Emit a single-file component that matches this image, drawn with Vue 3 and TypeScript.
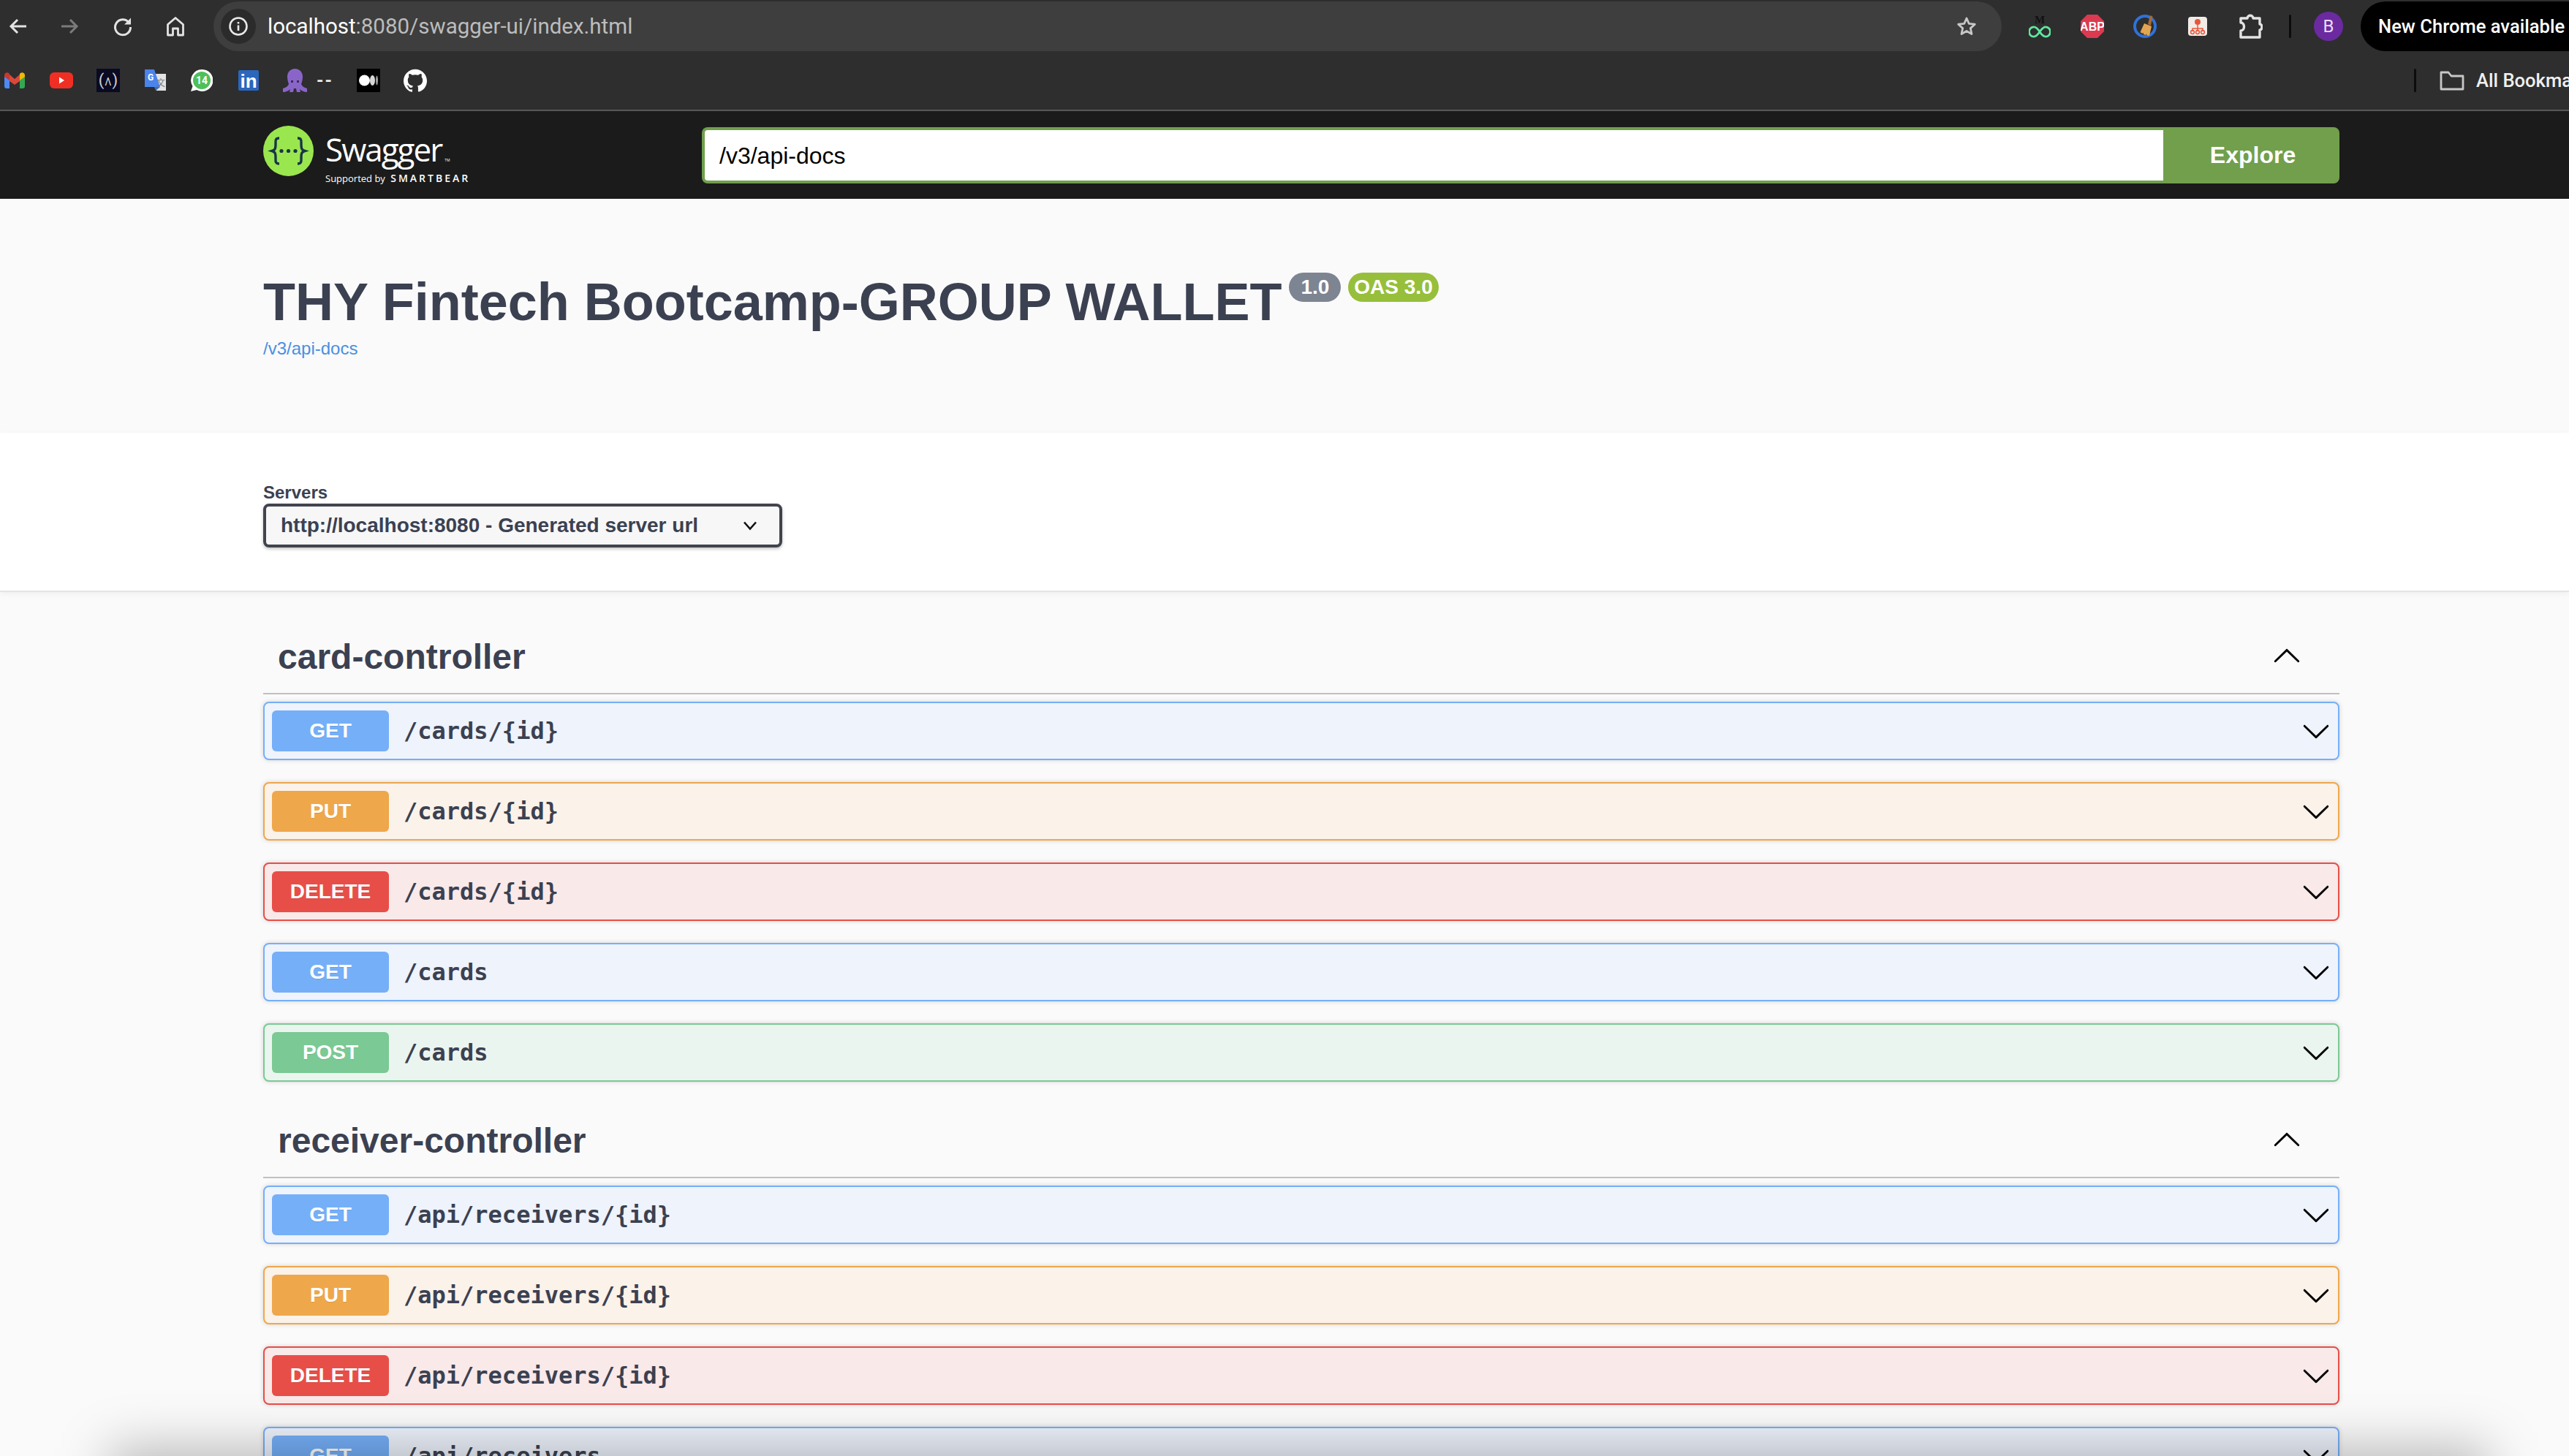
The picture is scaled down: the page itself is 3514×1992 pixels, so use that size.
<script setup lang="ts">
interface Operation {
  method: "GET" | "PUT" | "DELETE" | "POST";
  path: string;
}

interface Tag {
  name: string;
  operations: Operation[];
}

const tags: Tag[] = [
  {
    name: "card-controller",
    operations: [
      { method: "GET", path: "/cards/{id}" },
      { method: "PUT", path: "/cards/{id}" },
      { method: "DELETE", path: "/cards/{id}" },
      { method: "GET", path: "/cards" },
      { method: "POST", path: "/cards" },
    ],
  },
  {
    name: "receiver-controller",
    operations: [
      { method: "GET", path: "/api/receivers/{id}" },
      { method: "PUT", path: "/api/receivers/{id}" },
      { method: "DELETE", path: "/api/receivers/{id}" },
      { method: "GET", path: "/api/receivers" },
    ],
  },
];

const arrow =
  "M17.418 6.109c.272-.268.709-.268.979 0s.271.701 0 .969l-7.908 7.83c-.27.268-.707.268-.979 0l-7.908-7.83c-.27-.268-.27-.701 0-.969.271-.268.709-.268.979 0L10 13.25l7.418-7.141z";
</script>

<template>
  <div class="screen">
    <header class="browser">
      <div class="toolbar">
        <div class="nav">
          <svg class="nav-icon" viewBox="0 0 28 28" fill="none" stroke="#e3e3e3" stroke-width="3">
            <path d="M26 14H5M14 5l-9 9 9 9" />
          </svg>
          <svg class="nav-icon" viewBox="0 0 28 28" fill="none" stroke="#7b7b7b" stroke-width="3">
            <path d="M2 14h21M14 5l9 9-9 9" />
          </svg>
          <svg class="nav-icon" viewBox="0 0 28 28" fill="none" stroke="#e3e3e3" stroke-width="3">
            <path d="M22 8.500A10.500 10.500 0 1 0 24.500 15" />
            <path d="M25 2.500v9h-9z" fill="#e3e3e3" stroke="none" />
          </svg>
          <svg class="nav-icon" viewBox="0 0 28 28" fill="none" stroke="#e3e3e3" stroke-width="2.800">
            <path d="M14 2.500 3.500 11.500V26h7v-9h7v9h7V11.500z" stroke-linejoin="round" />
          </svg>
        </div>
        <div class="omnibox">
          <span class="site-info">
            <svg viewBox="0 0 28 28" width="28" height="28" fill="none">
              <circle cx="14" cy="14" r="11.500" stroke="#e8e8e8" stroke-width="2.600" />
              <path d="M14 12.500v7.500M14 8v2.600" stroke="#e8e8e8" stroke-width="2.600" />
            </svg>
          </span>
          <span class="url"><span class="url-host">localhost</span>:8080/swagger-ui/index.html</span>
          <svg class="star" viewBox="0 0 28 28" fill="none" stroke="#c7c7c7" stroke-width="2.800">
            <path d="m14 3 3.300 7.400 8 .8-6 5.400 1.700 7.900-7-4-7 4 1.700-7.900-6-5.400 8-.8z" stroke-linejoin="round" />
          </svg>
        </div>
        <div class="extensions">
          <span class="ext ext-infinity">
            <span class="ext-m">M</span>
            <svg viewBox="0 0 32 18" width="30" height="17" fill="none" stroke="#5ee8a0" stroke-width="3">
              <path d="M16 9c-3-4.500-5-7-8.500-7a7 7 0 0 0 0 14C11 16 13 13.500 16 9s5-7 8.500-7a7 7 0 0 1 0 14C21 16 19 13.500 16 9z" />
            </svg>
          </span>
          <span class="ext">
            <svg viewBox="0 0 32 32" width="32" height="32">
              <path d="M9 0h14l9 9v14l-9 9H9l-9-9V9z" fill="#dc3a50" />
              <text x="16" y="22" text-anchor="middle" class="abp">ABP</text>
            </svg>
          </span>
          <span class="ext">
            <svg viewBox="0 0 32 32" width="32" height="32" fill="none">
              <circle cx="16" cy="16" r="14" stroke="#2f72d8" stroke-width="4" />
              <path d="M20 13 23 1l3.500 1.500L24 15z" fill="#a56a34" />
              <path d="M15 12l10 4-3 13-3-.5-1-2-1 1.500-3-1-.5-2.500-1 1.500-3-2z" fill="#e2a551" />
            </svg>
          </span>
          <span class="ext">
            <svg viewBox="0 0 26 26" width="26" height="26">
              <rect width="26" height="26" rx="4" fill="#f1ece8" />
              <circle cx="13" cy="7" r="4" fill="#e8573a" />
              <path d="M13 11v5M6 20v-4h14v4M13 16v4" fill="none" stroke="#e8573a" stroke-width="1.500" />
              <circle cx="6" cy="21" r="2.400" fill="none" stroke="#e8573a" stroke-width="1.500" />
              <circle cx="13" cy="21" r="2.400" fill="none" stroke="#e8573a" stroke-width="1.500" />
              <circle cx="20" cy="21" r="2.400" fill="none" stroke="#e8573a" stroke-width="1.500" />
            </svg>
          </span>
          <span class="ext">
            <svg viewBox="0 0 34 34" width="34" height="34" fill="none" stroke="#e3e3e3" stroke-width="3.400">
              <path d="M4 6H13C13 1 21 1 21 6H30V14C34 14 34 22 30 22V32H4V23C10 23 10 12 4 12Z" stroke-linejoin="round" />
            </svg>
          </span>
          <span class="tool-divider"></span>
          <span class="avatar">B</span>
        </div>
        <div class="update-pill">New Chrome available</div>
      </div>
      <div class="bookmarks">
        <svg class="mark mark-gmail" viewBox="0 0 28 22">
          <path d="M0 4v15a3 3 0 0 0 3 3h4V9z" fill="#4c8bf5" />
          <path d="M21 22h4a3 3 0 0 0 3-3V4l-7 5z" fill="#34a853" />
          <path d="M7 12V3L14 9l7-6v9l-7 5z" fill="#d9483b" />
          <path d="M0 4c0-3 3.500-5 6-3l1 1v9L0 6z" fill="#c5392f" />
          <path d="M28 4c0-3-3.500-5-6-3l-1 1v9l7-5z" fill="#f2b707" />
        </svg>
        <svg class="mark mark-youtube" viewBox="0 0 32 22">
          <rect width="32" height="22" rx="6" fill="#ef2f24" />
          <path d="M13 6.500v9l7-4.500z" fill="#fff" />
        </svg>
        <span class="mark mark-fcc">(<i>&#923;</i>)</span>
        <svg class="mark mark-translate" viewBox="0 0 30 30">
          <path d="M14 6h16v23H17z" fill="#e3e3e3" />
          <path d="M1 0h13l8 24H1z" fill="#4a84ec" />
          <path d="M14 24h8l-6 5z" fill="#3c6dc4" />
          <text x="9" y="15" text-anchor="middle" class="translate-g">G</text>
          <text x="23" y="23" text-anchor="middle" class="translate-a">&#25991;</text>
        </svg>
        <svg class="mark mark-whatsapp" viewBox="0 0 30 30">
          <path d="M15 0a15 15 0 1 1-7 28L0 30l2.500-7A15 15 0 0 1 15 0z" fill="#fff" />
          <circle cx="15" cy="15" r="12" fill="#4fbf5b" />
          <text x="15" y="20" text-anchor="middle" class="wa-count">14</text>
        </svg>
        <span class="mark mark-linkedin">in</span>
        <svg class="mark mark-octopus" viewBox="0 0 33 32">
          <path d="M16.500 0C10 0 6 5 6 11c0 4 1 7 2 10-1 3-4 5-8 6v5c4 0 8-2 10-4l-1 4h5l1-5h3l1 5h5l-1-4c2 2 6 4 10 4v-5c-4-1-7-3-8-6 1-3 2-6 2-10C27 5 23 0 16.500 0z" fill="#8a65c9" />
          <rect x="11" y="16" width="3" height="3" fill="#3a2c55" />
          <rect x="19" y="16" width="3" height="3" fill="#3a2c55" />
        </svg>
        <span class="mark-label">--</span>
        <svg class="mark mark-medium" viewBox="0 0 32 32">
          <rect width="32" height="32" fill="#000" />
          <circle cx="10.500" cy="16" r="7.500" fill="#fff" />
          <ellipse cx="21.500" cy="16" rx="3.500" ry="7" fill="#d6d6d6" />
          <ellipse cx="27.500" cy="16" rx="1.500" ry="6.500" fill="#9e9e9e" />
        </svg>
        <svg class="mark mark-github" viewBox="0 0 24 24">
          <path d="M12 .5C5.370.5 0 5.870 0 12.500c0 5.300 3.438 9.800 8.205 11.385.6.113.82-.258.82-.577 0-.285-.01-1.040-.015-2.040-3.338.724-4.042-1.610-4.042-1.610C4.422 18.070 3.633 17.700 3.633 17.700c-1.087-.744.084-.729.084-.729 1.205.084 1.838 1.236 1.838 1.236 1.070 1.835 2.809 1.305 3.495.998.108-.776.417-1.305.76-1.605-2.665-.3-5.466-1.332-5.466-5.930 0-1.310.465-2.380 1.235-3.220-.135-.303-.54-1.523.105-3.176 0 0 1.005-.322 3.300 1.230.96-.267 1.980-.399 3-.405 1.020.006 2.040.138 3 .405 2.280-1.552 3.285-1.230 3.285-1.230.645 1.653.24 2.873.12 3.176.765.84 1.230 1.910 1.230 3.220 0 4.610-2.805 5.625-5.475 5.920.42.36.81 1.096.81 2.220 0 1.606-.015 2.896-.015 3.286 0 .315.21.69.825.57C20.565 22.292 24 17.797 24 12.500 24 5.870 18.627.5 12 .5z" fill="#fff" />
        </svg>
        <span class="bookmarks-fill"></span>
        <span class="tool-divider"></span>
        <svg class="folder" viewBox="0 0 34 28" fill="none" stroke="#c7c7c7" stroke-width="2.800">
          <path d="M2 26V3h10l4 5h16v18H2z" stroke-linejoin="round" />
        </svg>
        <span class="all-bookmarks">All Bookmarks</span>
      </div>
    </header>

    <div class="topbar">
      <div class="topbar-wrapper">
        <div class="logo">
          <svg class="logo-mark" viewBox="0 0 69 69">
            <circle cx="34.500" cy="34.500" r="34.500" fill="#9ae64f" />
            <path d="M22 17c-6 0-5 4-5 8 0 5 0 8-5 9.500 5 1.500 5 4.500 5 9.500 0 4-1 8 5 8M47 17c6 0 5 4 5 8 0 5 0 8 5 9.500-5 1.500-5 4.500-5 9.500 0 4 1 8-5 8" fill="none" stroke="#173646" stroke-width="3.400" />
            <circle cx="25" cy="34.500" r="2.600" fill="#173646" />
            <circle cx="34.500" cy="34.500" r="2.600" fill="#173646" />
            <circle cx="44" cy="34.500" r="2.600" fill="#173646" />
          </svg>
          <div class="logo-text">
            <span class="logo-name">Swagger<small>TM</small></span>
            <span class="logo-sub">Supported by <b>SMARTBEAR</b></span>
          </div>
        </div>
        <div class="download-form">
          <div class="url-input">/v3/api-docs</div>
          <div class="explore">Explore</div>
        </div>
      </div>
    </div>

    <section class="info">
      <div class="title-row">
        <h2 class="title">THY Fintech Bootcamp-GROUP WALLET</h2>
        <span class="badge badge-version">1.0</span>
        <span class="badge badge-oas">OAS 3.0</span>
      </div>
      <a class="spec-link">/v3/api-docs</a>
    </section>

    <section class="servers">
      <span class="servers-title">Servers</span>
      <div class="server-select">
        <span>http://localhost:8080 - Generated server url</span>
        <svg viewBox="0 0 20 20" width="20" height="20" fill="none" stroke="#111" stroke-width="2.600">
          <path d="m2 5.500 8 9 8-9" />
        </svg>
      </div>
    </section>

    <main class="operations">
      <section v-for="tag in tags" :key="tag.name" class="tag-section">
        <div class="tag-head">
          <h3 class="tag-name">{{ tag.name }}</h3>
          <svg class="tag-arrow" viewBox="0 0 20 20"><path :d="arrow" /></svg>
        </div>
        <div
          v-for="op in tag.operations"
          :key="op.method + op.path"
          class="opblock"
          :class="'opblock-' + op.method.toLowerCase()"
        >
          <span class="method">{{ op.method }}</span>
          <span class="path">{{ op.path }}</span>
          <svg class="op-arrow" viewBox="0 0 20 20"><path :d="arrow" /></svg>
        </div>
      </section>
    </main>

    <div class="bottom-shadow"></div>
  </div>
</template>

<style scoped>
.screen {
  position: relative;
  height: 1992px;
  overflow: hidden;
  background: #fafafa;
  font-family: "Liberation Sans", Arial, sans-serif;
  color: #3b4151;
}

.browser {
  height: 152px;
  box-sizing: border-box;
  background: #2e2e2e;
  border-bottom: 2px solid #575757;
  font-family: Roboto, "Liberation Sans", sans-serif;
}

.toolbar {
  display: flex;
  align-items: center;
  height: 72px;
}

.nav {
  display: flex;
  align-items: center;
  gap: 44px;
  padding: 0 38px 0 10px;
}

.nav-icon {
  width: 28px;
  height: 28px;
}

.omnibox {
  display: flex;
  align-items: center;
  width: 2446px;
  height: 68px;
  box-sizing: border-box;
  padding: 0 34px 0 10px;
  border-radius: 34px;
  background: #3e3e3e;
}

.site-info {
  display: flex;
  align-items: center;
  justify-content: center;
  width: 48px;
  height: 48px;
  border-radius: 50%;
  background: #2b2b2b;
}

.url {
  flex: 1;
  margin-left: 16px;
  font-size: 29.5px;
  color: #bcbcbc;
}

.url-host {
  color: #fff;
}

.star {
  width: 28px;
  height: 28px;
}

.extensions {
  display: flex;
  align-items: center;
  padding-left: 16px;
}

.ext {
  display: flex;
  flex-direction: column;
  align-items: center;
  justify-content: center;
  width: 72px;
}

.ext-m {
  font: bold 15px/15px "Liberation Serif", serif;
  color: #111;
}

.abp {
  font: bold 16px "Liberation Sans", sans-serif;
  fill: #fff;
}

.tool-divider {
  width: 3px;
  height: 32px;
  border-radius: 2px;
  background: #0c0c0c;
}

.extensions .tool-divider {
  margin-left: 17px;
}

.avatar {
  display: flex;
  align-items: center;
  justify-content: center;
  width: 40px;
  height: 40px;
  margin-left: 31px;
  border-radius: 50%;
  background: #6b2aa0;
  color: #e9dcf5;
  font-size: 24px;
}

.update-pill {
  margin-left: 24px;
  flex: 1;
  height: 68px;
  padding-left: 24px;
  border-radius: 34px 0 0 34px;
  background: #000;
  color: #fff;
  font-size: 25.6px;
  font-weight: 500;
  line-height: 68px;
  white-space: nowrap;
}

.bookmarks {
  display: flex;
  align-items: center;
  height: 76px;
  padding-left: 6px;
  overflow: hidden;
}

.mark {
  flex: none;
  display: block;
}

.mark-gmail {
  width: 28px;
  height: 22px;
  margin-right: 34px;
}

.mark-youtube {
  width: 32px;
  height: 22px;
  margin-right: 32px;
}

.mark-fcc {
  width: 32px;
  height: 32px;
  margin-right: 33px;
  background: #0a0a23;
  color: #d0d0d0;
  font-size: 22px;
  line-height: 32px;
  text-align: center;
  white-space: nowrap;
}

.mark-fcc i {
  font-style: normal;
  font-size: 14px;
  margin: 0 1px;
}

.mark-translate {
  width: 30px;
  height: 30px;
  margin-right: 34px;
}

.translate-g {
  font: bold 12px Roboto, sans-serif;
  fill: #fff;
}

.translate-a {
  font: 12px "Noto Sans CJK SC", sans-serif;
  fill: #777;
}

.mark-whatsapp {
  width: 30px;
  height: 30px;
  margin-right: 35px;
}

.wa-count {
  font: bold 14px Roboto, sans-serif;
  fill: #fff;
}

.mark-linkedin {
  width: 28px;
  height: 28px;
  margin-right: 33px;
  border-radius: 2px;
  background: #2a67bd;
  color: #fff;
  font: bold 26px/30px "Liberation Sans", sans-serif;
  text-align: center;
}

.mark-octopus {
  width: 33px;
  height: 32px;
}

.mark-label {
  flex: none;
  width: 68px;
  padding-left: 13px;
  box-sizing: border-box;
  color: #f0f0f0;
  font-size: 24px;
  font-weight: 700;
  letter-spacing: 2px;
}

.mark-medium {
  width: 32px;
  height: 32px;
  margin-right: 32px;
}

.mark-github {
  width: 32px;
  height: 32px;
}

.bookmarks-fill {
  flex: 1;
}

.folder {
  flex: none;
  width: 34px;
  height: 28px;
  margin-left: 32px;
}

.all-bookmarks {
  flex: none;
  width: 127px;
  margin-left: 16px;
  overflow: hidden;
  color: #f0f0f0;
  font-size: 25.6px;
  font-weight: 500;
  white-space: nowrap;
}

.topbar {
  height: 120px;
  background: #1b1b1b;
}

.topbar-wrapper {
  display: flex;
  align-items: center;
  width: 2840px;
  height: 120px;
  padding-left: 360px;
}

.logo {
  display: flex;
  align-self: flex-start;
  width: 600px;
  flex: none;
  padding-top: 20px;
}

.logo-mark {
  width: 69px;
  height: 69px;
  flex: none;
}

.logo-text {
  display: flex;
  flex-direction: column;
  margin-left: 16px;
  padding-top: 6px;
  color: #fff;
  font-family: "Open Sans", sans-serif;
}

.logo-name {
  font-size: 44px;
  font-weight: 400;
  line-height: 52px;
  letter-spacing: -2px;
  white-space: nowrap;
}

.logo-name small {
  margin-left: 4px;
  font-size: 5px;
  line-height: 0;
  letter-spacing: 0;
}

.logo-sub {
  margin-top: 5px;
  font-size: 13px;
  line-height: 18px;
  white-space: nowrap;
}

.logo-sub b {
  font-size: 14px;
  font-weight: 600;
  letter-spacing: 3px;
  margin-left: 4px;
}

.download-form {
  display: flex;
  flex: 1;
  height: 77px;
}

.url-input {
  flex: 1;
  box-sizing: border-box;
  padding-left: 20px;
  border: 4px solid #719f4c;
  border-right: none;
  border-radius: 8px 0 0 8px;
  background: #fff;
  color: #000;
  font-size: 32px;
  line-height: 71px;
}

.explore {
  width: 241px;
  box-sizing: border-box;
  padding-left: 4px;
  border-radius: 0 8px 8px 0;
  background: #719f4c;
  color: #fff;
  font-size: 32px;
  font-weight: 700;
  line-height: 77px;
  text-align: center;
}

.info {
  height: 320px;
  box-sizing: border-box;
  padding: 100px 0 0 360px;
  background: #fafafa;
}

.title-row {
  display: flex;
  align-items: flex-start;
}

.title {
  margin: 0;
  font-size: 72px;
  font-weight: 700;
  line-height: 82px;
  white-space: nowrap;
}

.badge {
  margin-top: 1px;
  border-radius: 20px;
  color: #fff;
  font-size: 28px;
  font-weight: 700;
  line-height: 40px;
}

.badge-version {
  margin-left: 10px;
  padding: 0 16px;
  background: #7d8492;
}

.badge-oas {
  margin-left: 10px;
  padding: 0 8px;
  background: #97bf3b;
}

.spec-link {
  display: block;
  margin-top: 6px;
  color: #4990e2;
  font-size: 24px;
  line-height: 34px;
}

.servers {
  height: 218px;
  box-sizing: border-box;
  padding: 68px 0 0 360px;
  background: #fff;
  border-bottom: 2px solid #e4e4e4;
  box-shadow: 0 2px 8px rgba(0, 0, 0, 0.05);
}

.servers-title {
  display: block;
  font-size: 24px;
  font-weight: 700;
  line-height: 28px;
}

.server-select {
  display: flex;
  align-items: center;
  justify-content: space-between;
  width: 710px;
  height: 60px;
  box-sizing: border-box;
  margin-top: 1px;
  padding: 0 30px 0 20px;
  border: 4px solid #41444e;
  border-radius: 8px;
  background: #f7f7f7;
  box-shadow: 0 2px 4px rgba(0, 0, 0, 0.25);
  font-size: 28px;
  font-weight: 700;
}

.operations {
  width: 2840px;
  padding: 38px 0 0 360px;
}

.tag-head {
  display: flex;
  align-items: center;
  justify-content: space-between;
  height: 100px;
  padding: 0 52px 0 20px;
  border-bottom: 2px solid #c0bfc7;
}

.tag-name {
  margin: 0;
  font-size: 48px;
  font-weight: 700;
}

.tag-arrow {
  width: 40px;
  height: 40px;
  transform: rotate(180deg);
}

.opblock {
  display: flex;
  align-items: center;
  height: 80px;
  box-sizing: border-box;
  margin: 10px 0 30px;
  padding: 0 10px;
  border: 2px solid;
  border-radius: 8px;
  box-shadow: 0 0 6px rgba(0, 0, 0, 0.16);
}

.opblock + .opblock {
  margin-top: 0;
}

.method {
  width: 160px;
  height: 56px;
  border-radius: 6px;
  color: #fff;
  font-size: 28px;
  font-weight: 700;
  line-height: 56px;
  text-align: center;
  text-shadow: 0 1px 0 rgba(0, 0, 0, 0.1);
}

.path {
  flex: 1;
  margin-left: 20px;
  font-family: "DejaVu Sans Mono", monospace;
  font-size: 32px;
  font-weight: 700;
}

.op-arrow {
  width: 40px;
  height: 40px;
}

.opblock-get {
  background: #eef3fc;
  border-color: #75aff8;
}

.opblock-get .method {
  background: #75aff8;
}

.opblock-put {
  background: #fbf2e9;
  border-color: #efa74b;
}

.opblock-put .method {
  background: #efa74b;
}

.opblock-delete {
  background: #f9e9e9;
  border-color: #e84e48;
}

.opblock-delete .method {
  background: #e84e48;
}

.opblock-post {
  background: #ebf5ef;
  border-color: #7bc994;
}

.opblock-post .method {
  background: #7bc994;
}

.bottom-shadow {
  position: absolute;
  left: 150px;
  right: 110px;
  bottom: -70px;
  height: 80px;
  background: rgba(0, 0, 0, 0.27);
  filter: blur(35px);
  pointer-events: none;
}
</style>

<style>
html,
body {
  margin: 0;
  overflow: hidden;
}
</style>
